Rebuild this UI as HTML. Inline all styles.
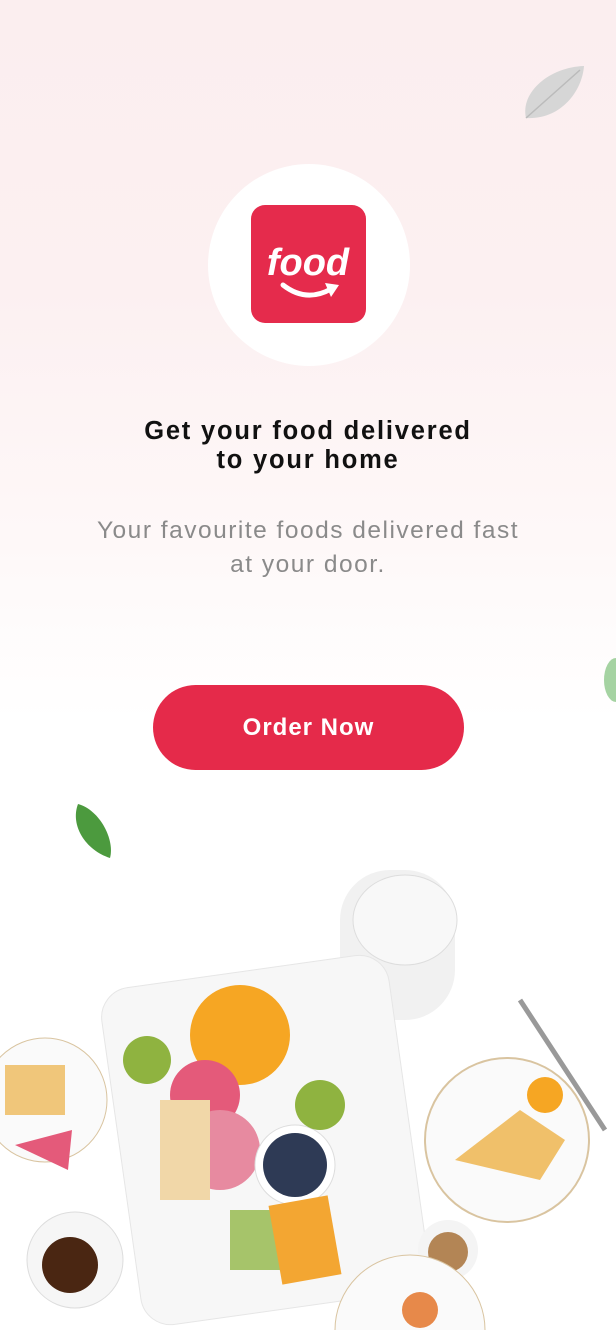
<!DOCTYPE html>
<html><head><meta charset="utf-8"><style>
html,body{margin:0;padding:0;background:#fff;overflow:hidden}
body{width:616px;height:1330px;position:relative;overflow:hidden;font-family:"Liberation Sans",sans-serif}
.bg{position:absolute;left:0;top:0;width:616px;height:720px;background:linear-gradient(180deg,#fbeeef 0%,#fcf0f1 40%,#fef8f8 75%,#fff 100%)}
.circle{position:absolute;left:208px;top:164px;width:202px;height:202px;border-radius:50%;background:#fff}
.logo{position:absolute;left:251px;top:205px;width:115px;height:118px;background:#e52b4c;border-radius:14px}
h1{position:absolute;top:417px;left:0;width:616px;margin:0;text-align:center;font-size:25.5px;line-height:29px;font-weight:bold;color:#111;letter-spacing:1.8px}
p{position:absolute;top:514px;left:0;width:616px;margin:0;text-align:center;font-size:24.5px;line-height:34px;color:#8a8a8a;letter-spacing:1.5px}
.btn{position:absolute;left:153px;top:685px;width:311px;height:85px;border-radius:43px;background:#e52a4a;color:#fff;font-size:24px;font-weight:bold;text-align:center;line-height:85px;letter-spacing:1px}
</style></head><body>
<div class="bg"></div>
<svg style="position:absolute;left:520px;top:62px" width="70" height="62"><path d="M6 56 C0 30 30 5 64 4 C62 30 40 58 6 56Z" fill="#d6d6d6"/><path d="M6 56 L60 8" stroke="#bbb" stroke-width="1.5"/></svg>
<div class="circle"></div>
<div class="logo">
<svg width="115" height="118" viewBox="0 0 115 118"><text x="57" y="70" text-anchor="middle" font-family="Liberation Sans" font-style="italic" font-weight="bold" font-size="38" fill="#fff">food</text><path d="M32 80 Q55 98 80 84" stroke="#fff" stroke-width="5" fill="none" stroke-linecap="round"/><path d="M74 78 L88 80 L80 92Z" fill="#fff"/></svg>
</div>
<h1>Get your food delivered<br>to your home</h1>
<p>Your favourite foods delivered fast<br>at your door.</p>
<div class="btn">Order Now</div>
<svg style="position:absolute;left:596px;top:655px" width="20" height="50"><ellipse cx="20" cy="25" rx="12" ry="22" fill="#7fc07a" opacity=".7"/></svg>
<svg style="position:absolute;left:70px;top:800px" width="45" height="62"><path d="M8 4 C30 10 45 40 40 58 C15 50 0 25 8 4Z" fill="#4c9a3e"/></svg>
<svg style="position:absolute;left:0;top:840px" width="616" height="490">
<rect x="340" y="30" width="115" height="150" rx="50" fill="#f1f1f1"/>
<ellipse cx="405" cy="80" rx="52" ry="45" fill="#f8f8f8" stroke="#ddd"/>
<rect x="120" y="130" width="290" height="340" rx="30" fill="#f7f7f7" stroke="#e6e6e6" transform="rotate(-8 265 300)"/>
<circle cx="240" cy="195" r="50" fill="#f6a623"/>
<circle cx="147" cy="220" r="24" fill="#8fb340"/>
<circle cx="205" cy="255" r="35" fill="#e45a7a"/>
<circle cx="220" cy="310" r="40" fill="#e78aa0"/>
<circle cx="295" cy="325" r="40" fill="#fff" stroke="#ddd"/>
<circle cx="295" cy="325" r="32" fill="#2e3a55"/>
<circle cx="320" cy="265" r="25" fill="#8fb340"/>
<rect x="160" y="260" width="50" height="100" fill="#f1d7a8"/>
<rect x="230" y="370" width="60" height="60" fill="#a6c46a"/>
<rect x="275" y="360" width="60" height="80" fill="#f3a632" transform="rotate(-10 305 400)"/>
<circle cx="45" cy="260" r="62" fill="#fafafa" stroke="#d9c4a0"/>
<rect x="5" y="225" width="60" height="50" fill="#f0c67a"/>
<path d="M15 305 L72 290 L68 330Z" fill="#e45a7a"/>
<circle cx="507" cy="300" r="82" fill="#fafafa" stroke="#d9c4a0" stroke-width="2"/>
<path d="M455 320 L520 270 L565 300 L540 340Z" fill="#f0c06a"/>
<circle cx="545" cy="255" r="18" fill="#f6a623"/>
<path d="M520 160 L605 290" stroke="#999" stroke-width="5"/>
<circle cx="75" cy="420" r="48" fill="#f6f6f6" stroke="#ddd"/>
<circle cx="70" cy="425" r="28" fill="#4a2612"/>
<circle cx="448" cy="410" r="30" fill="#f4f4f4"/>
<circle cx="448" cy="412" r="20" fill="#b38555"/>
<circle cx="410" cy="490" r="75" fill="#fafafa" stroke="#d9c4a0"/>
<circle cx="420" cy="470" r="18" fill="#e7894a"/>
</svg>
</body></html>
